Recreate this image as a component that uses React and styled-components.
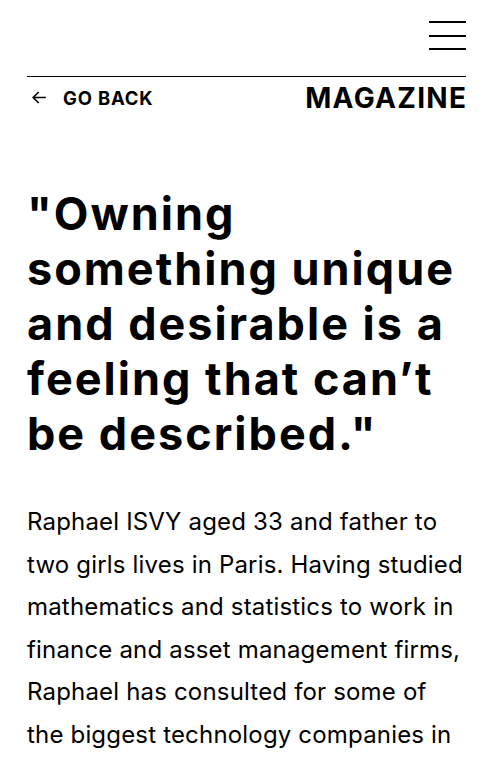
import React from 'react';
import styled, { createGlobalStyle } from 'styled-components';

const GlobalStyle = createGlobalStyle`
  body {
    margin: 0;
    background: #fff;
    color: #000;
    font-family: Inter, "Noto Sans", sans-serif;
  }
`;

const Page = styled.div`
  padding: 0 29px 0 27px;
  overflow: hidden;
`;

const TopBar = styled.header`
  display: flex;
  justify-content: flex-end;
  align-items: flex-start;
  padding-top: 21px;
  height: 76px;
  box-sizing: border-box;
`;

const MenuButton = styled.button`
  display: flex;
  flex-direction: column;
  gap: 11.5px;
  width: 37px;
  padding: 0;
  border: 0;
  background: none;
  cursor: pointer;
  span {
    display: block;
    width: 100%;
    height: 2px;
    background: #000;
  }
`;

const NavRow = styled.nav`
  display: flex;
  justify-content: space-between;
  align-items: center;
  border-top: 1px solid #000;
  height: 41px;
`;

const BackLink = styled.a`
  display: flex;
  align-items: center;
  gap: 14px;
  color: #000;
  text-decoration: none;
  font-weight: 700;
  font-size: 18.5px;
  letter-spacing: 0.8px;
  padding-left: 3px;
  svg {
    width: 19px;
    height: 19px;
  }
`;

const Section = styled.span`
  font-weight: 700;
  font-size: 28px;
  letter-spacing: 1.3px;
  margin-right: -1.3px;
`;

const Article = styled.article`
  padding-top: 68px;
`;

const Quote = styled.h1`
  margin: 0;
  font-size: 45px;
  line-height: 55px;
  font-weight: 700;
  letter-spacing: 2px;
`;

const Body = styled.p`
  margin: 40px 0 0;
  font-size: 24px;
  line-height: 42.5px;
  font-weight: 400;
  letter-spacing: 0.18px;
`;

export default function App() {
  return (
    <>
      <GlobalStyle />
      <Page>
        <TopBar>
          <MenuButton aria-label="Menu">
            <span />
            <span />
            <span />
          </MenuButton>
        </TopBar>
        <NavRow>
          <BackLink href="#">
            <svg viewBox="0 0 24 24" fill="none" stroke="#000" strokeWidth="2">
              <path d="M20 12H4M11 5l-7 7 7 7" />
            </svg>
            GO BACK
          </BackLink>
          <Section>MAGAZINE</Section>
        </NavRow>
        <Article>
          <Quote>"Owning something unique and desirable is a feeling that can’t be described."</Quote>
          <Body>
            Raphael ISVY aged 33 and father to two girls lives in Paris. Having studied
            mathematics and statistics to work in finance and asset management firms,
            Raphael has consulted for some of the biggest technology companies in the
            world before founding his own venture.
          </Body>
        </Article>
      </Page>
    </>
  );
}
